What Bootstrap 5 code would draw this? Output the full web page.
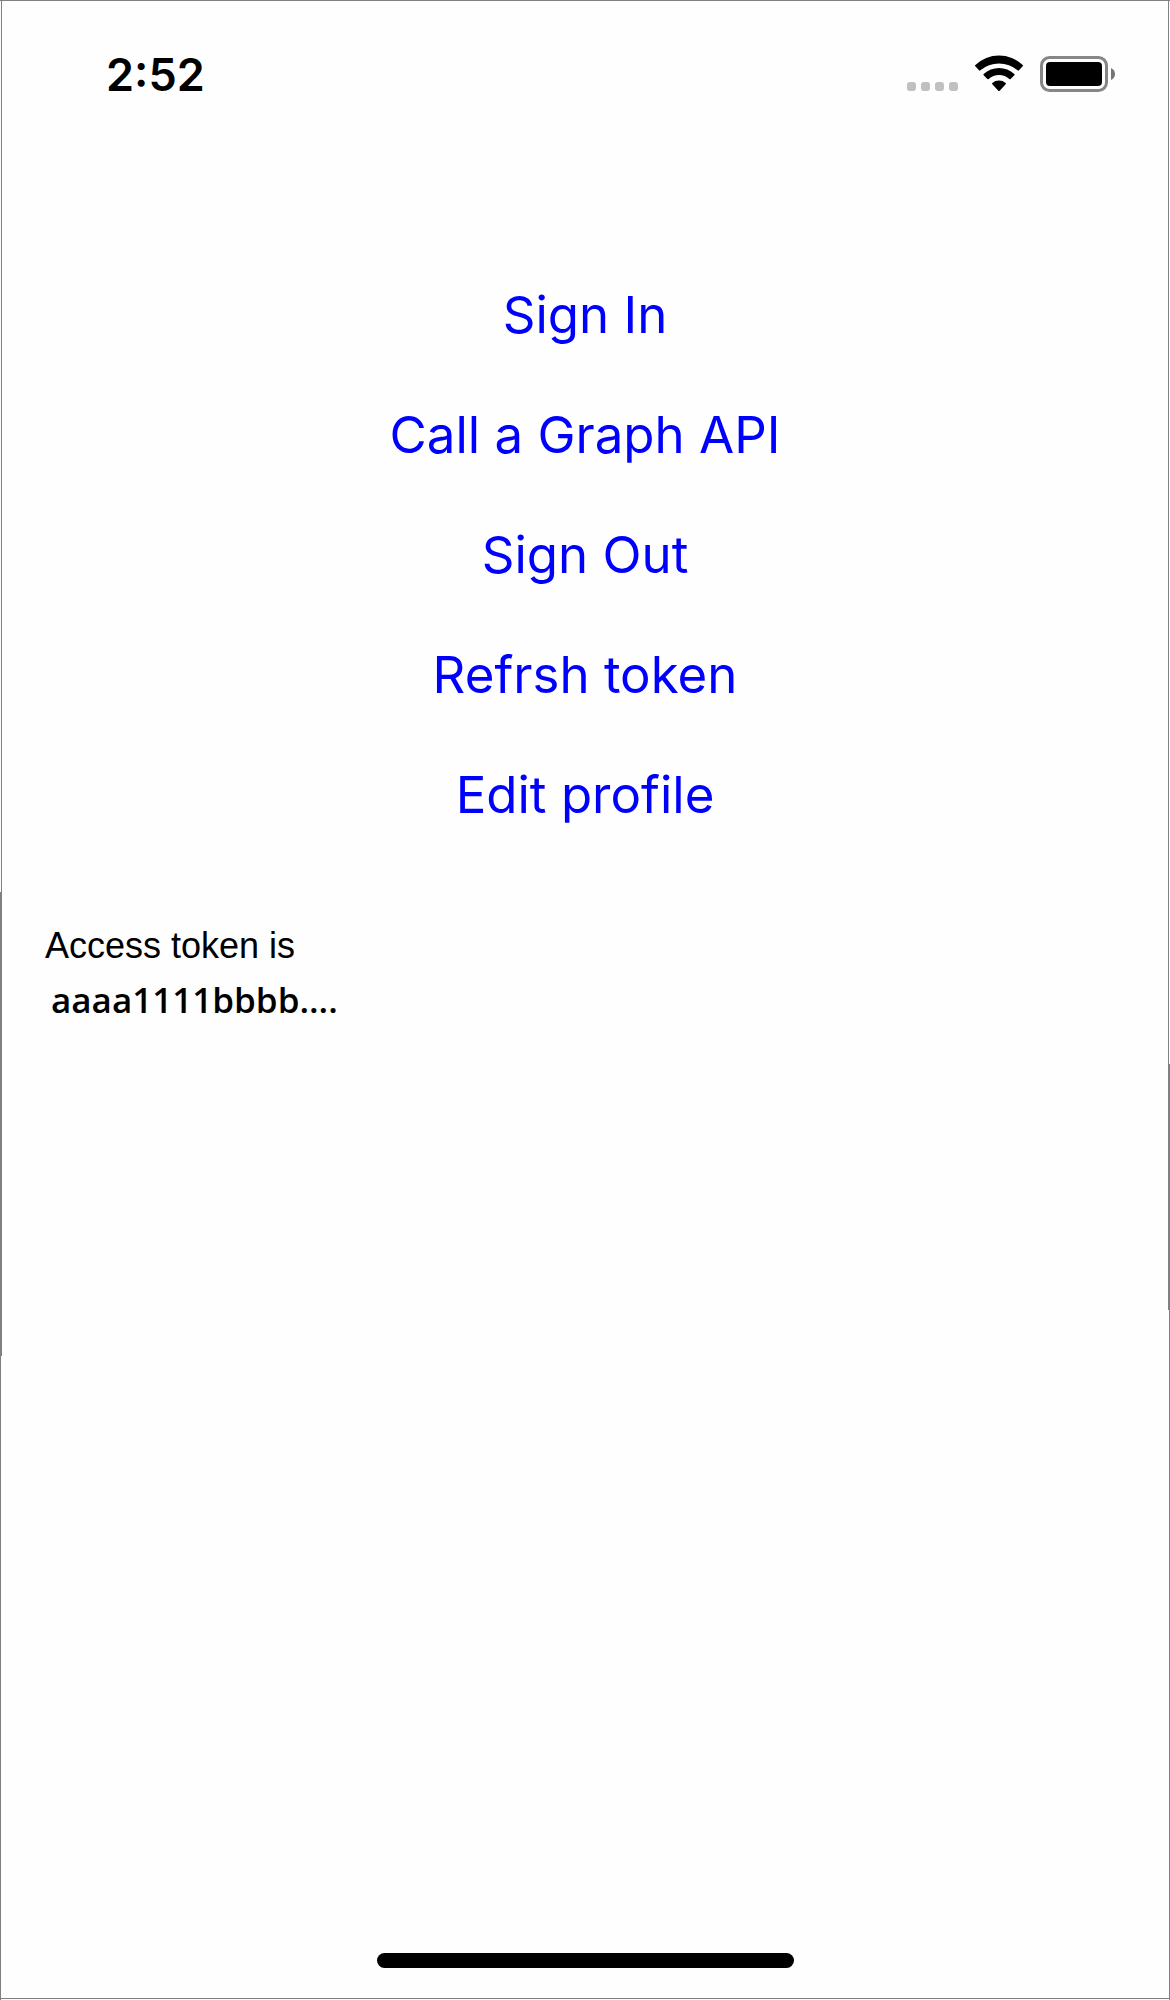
<!DOCTYPE html>
<html lang="en">
<head>
<meta charset="utf-8">
<meta name="viewport" content="width=device-width, initial-scale=1">
<title>Account</title>
<link href="https://cdn.jsdelivr.net/npm/bootstrap@5.3.0/dist/css/bootstrap.min.css" rel="stylesheet">
<style>
  body { color: #000; background: #fefefe; }
  .screen {
    --edge: linear-gradient(#808080, #808080);
    min-height: 100vh;
    font-family: Inter, sans-serif;
    background:
      var(--edge) 0 0 / 100% 1px,
      var(--edge) 0 calc(100% - 1px) / 100% 1px,
      var(--edge) 1px 0 / 1px 67.8%,
      var(--edge) 0 100% / 1px 55.4%,
      var(--edge) calc(100% - 1px) 0 / 1px 65.5%,
      var(--edge) 100% 100% / 1px 46.8%,
      #fefefe;
    background-repeat: no-repeat;
  }
  .status-bar { padding: 46px 55px 0 106px; }
  .clock { font-size: 45px; line-height: 58px; font-weight: 600; }
  .status-icons { gap: 17px; padding-top: 9px; }
  .signal { margin-bottom: 1px; }
  .actions { padding-top: 176px; gap: 50px; }
  .actions .btn-link {
    padding: 0 16px;
    border: 0;
    color: #00f;
    font-size: 51px;
    line-height: 70px;
    text-decoration: none;
  }
  .token-log { padding: 89px 45px 0; }
  .token-label { font: 36px/54px "Liberation Sans", Arial, sans-serif; }
  .token-value { font: 600 35px/54px "Open Sans", sans-serif; padding-left: 6px; }
  .home-bar { width: 417px; max-width: 60%; height: 15px; margin-bottom: 32px; }
</style>
<script src="https://cdn.jsdelivr.net/npm/bootstrap@5.3.0/dist/js/bootstrap.bundle.min.js" defer></script>
</head>
<body>
<div class="screen d-flex flex-column">
  <header class="status-bar d-flex justify-content-between align-items-start">
    <time class="clock">2:52</time>
    <div class="status-icons d-flex align-items-end">
      <svg class="signal" width="51" height="9" viewBox="0 0 51 9" fill="#c0c0c0" role="img" aria-label="No signal">
        <rect width="9" height="9" rx="3"/><rect x="14" width="9" height="9" rx="3"/><rect x="28" width="9" height="9" rx="3"/><rect x="42" width="9" height="9" rx="3"/>
      </svg>
      <svg width="48" height="37" viewBox="0 0 144 111" role="img" aria-label="Wi-Fi">
        <path d="M1 30A102 102 0 0 1 143 30Q145 32 143 34L132 46Q130 48 128 46A86 86 0 0 0 16 46Q14 48 12 46L1 34Q-1 32 1 30Z"/>
        <path d="M26 57A68 68 0 0 1 118 57Q120 59 118 61L107 72Q105 74 103 72A47 47 0 0 0 41 72Q39 74 37 72L26 61Q24 59 26 57Z"/>
        <path d="M52 84A31 31 0 0 1 92 84Q94 86 92 88L74 107Q72 109 70 107L52 88Q50 86 52 84Z"/>
      </svg>
      <svg width="75" height="36" viewBox="0 0 75 36" role="img" aria-label="Battery full">
        <rect x="1.5" y="1.5" width="65" height="33" rx="8" fill="none" stroke="#868686" stroke-width="3"/>
        <rect x="6" y="6" width="56" height="24" rx="4"/>
        <path d="M71 12Q75 14 75 18T71 24Z" fill="#757575"/>
      </svg>
    </div>
  </header>

  <main class="flex-grow-1">
    <div class="actions d-flex flex-column align-items-center">
      <button type="button" class="btn btn-link">Sign In</button>
      <button type="button" class="btn btn-link">Call a Graph API</button>
      <button type="button" class="btn btn-link">Sign Out</button>
      <button type="button" class="btn btn-link">Refrsh token</button>
      <button type="button" class="btn btn-link">Edit profile</button>
    </div>
    <div class="token-log">
      <div class="token-label">Access token is</div>
      <div class="token-value">aaaa1111bbbb....</div>
    </div>
  </main>

  <footer class="d-flex justify-content-center">
    <div class="home-bar bg-black rounded-pill"></div>
  </footer>
</div>
</body>
</html>
